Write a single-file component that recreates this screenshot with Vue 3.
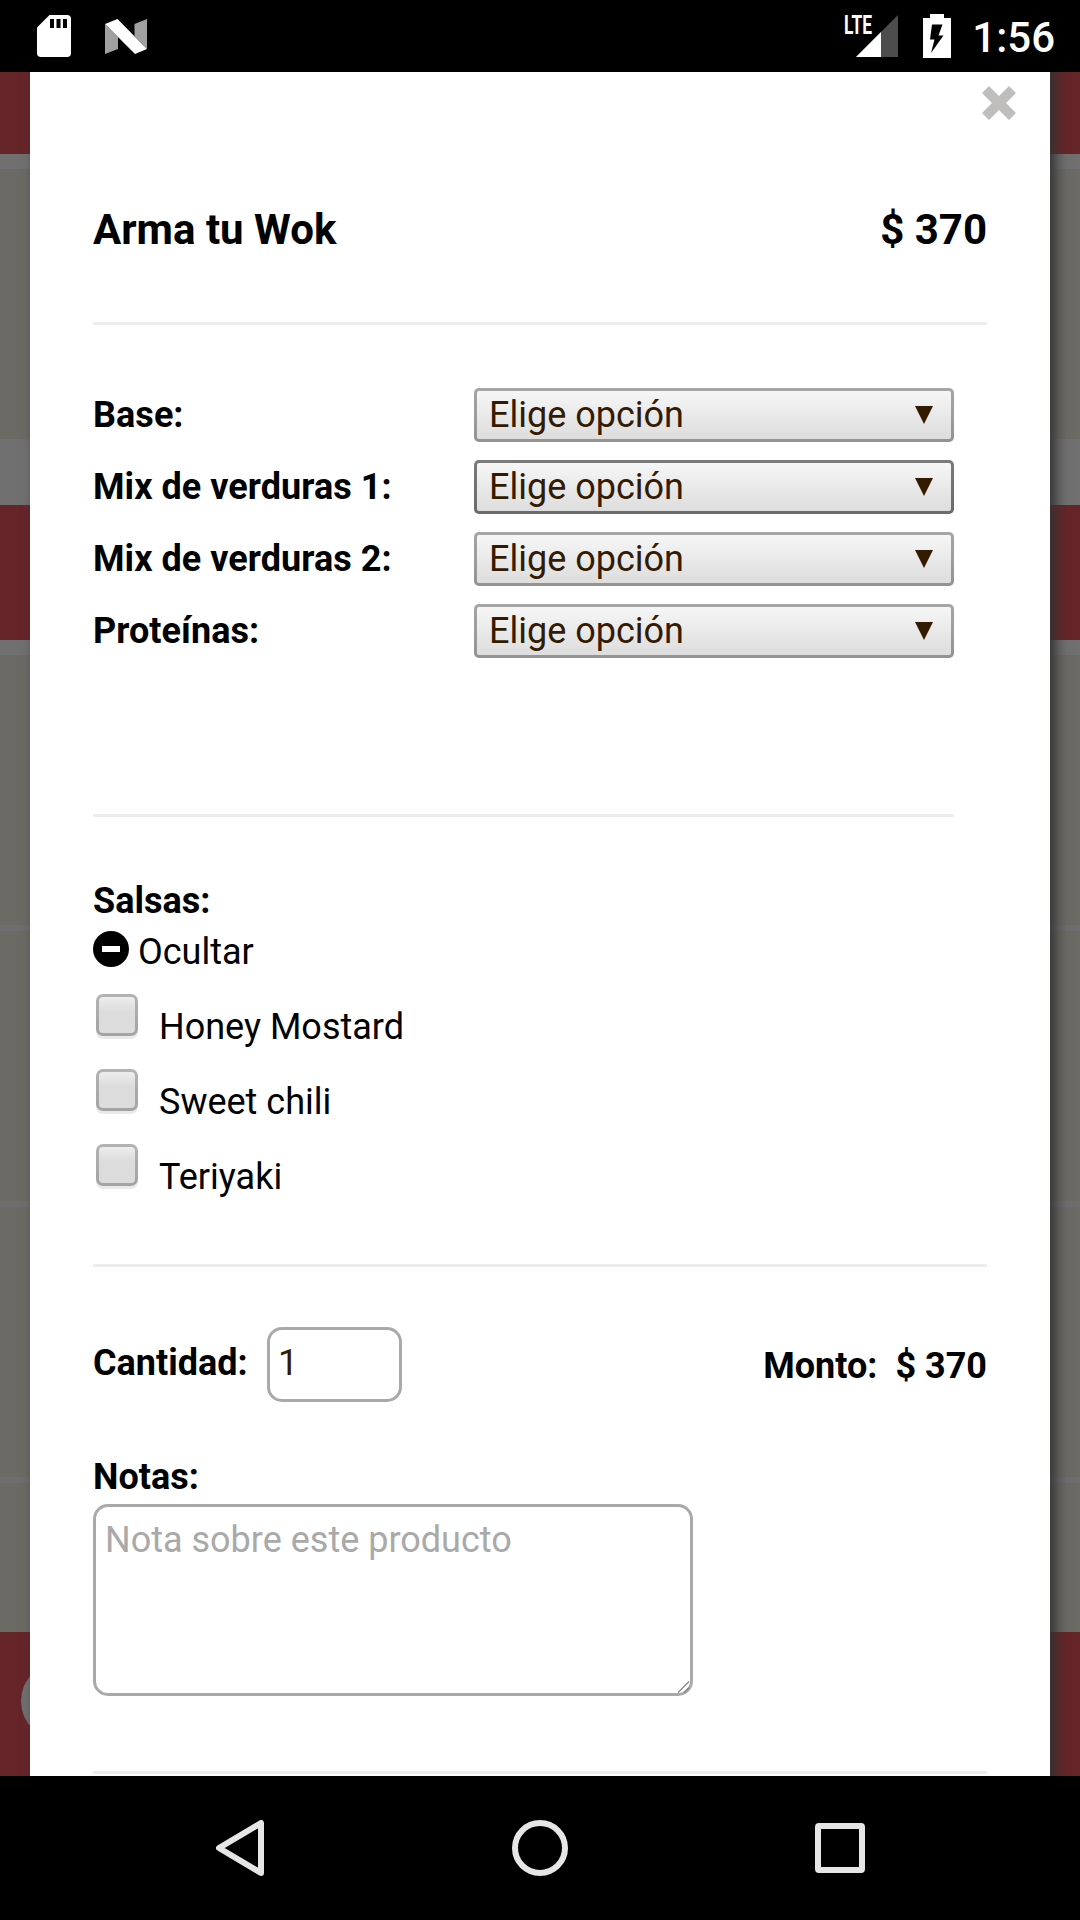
<template>
  <div class="screen">
    <header class="status-bar">
      <div class="status-left">
        <svg class="sd-icon" width="34" height="42" viewBox="0 0 34 42">
          <path fill="#fff" d="M12.5 0H30a4 4 0 0 1 4 4v34a4 4 0 0 1-4 4H4a4 4 0 0 1-4-4V12.5z" />
          <path fill="#000" d="M13 4h4v9h-4zM19.500 4h4v9h-4zM26 4h4v9h-4z" />
        </svg>
        <svg class="n-icon" width="42" height="35" viewBox="0 0 42 35">
          <path fill="#a0a0a0" d="M0 5l13 13v12L0 35zM42 0v30L29.500 17V5z" />
          <path fill="#fff" d="M0 5L12.500 0 42 30l-12 5z" />
        </svg>
      </div>
      <div class="status-right">
        <svg width="54" height="63" viewBox="0 -10 54 63">
          <path fill="#4d4d4d" d="M54 0v42H12z" />
          <path fill="#fff" d="M37 17v25H12z" />
          <text x="0" y="19" class="lte" textLength="28" lengthAdjust="spacingAndGlyphs">LTE</text>
        </svg>
        <svg class="battery" width="28" height="44" viewBox="0 0 28 44">
          <path fill="#fff" d="M7 0h14v4h7v40H0V4h7z" />
          <path fill="#000" d="M9 10.500h10.500l-4 11h5L8 39l3.500-13.500H7z" />
        </svg>
        <span class="clock">1:56</span>
      </div>
    </header>

    <main class="viewport">
      <!-- Menu page dimmed behind the dialog -->
      <div class="page">
        <div
          v-for="(band, i) in bands"
          :key="i"
          :class="['band', band.kind]"
          :style="{ height: band.height + 'px' }"
        ></div>
        <div class="page-badge"></div>
      </div>

      <section class="modal">
        <button class="close" aria-label="Cerrar">
          <svg width="34" height="34" viewBox="0 0 34 34">
            <path fill="#bfbebc" d="M7 0l10 10L27 0l7 7-10 10 10 10-7 7-10-10L7 34l-7-7 10-10L0 7z" />
          </svg>
        </button>

        <div class="title-row">
          <h1>Arma tu Wok</h1>
          <span>$ {{ price }}</span>
        </div>
        <hr />

        <div class="options">
          <div v-for="opt in options" :key="opt.label" class="option">
            <label>{{ opt.label }}</label>
            <div class="select-box" :class="{ focused: opt.focused }">
              <select>
                <option>Elige opción</option>
              </select>
              <svg width="18" height="18" viewBox="0 0 18 18">
                <path fill="#331a00" d="M0 0h18L9 18z" />
              </svg>
            </div>
          </div>
        </div>
        <hr class="short" />

        <div class="sauces">
          <h2>Salsas:</h2>
          <div class="toggle" @click="open = !open">
            <svg width="36" height="36" viewBox="0 0 36 36">
              <circle cx="18" cy="18" r="18" />
              <path fill="#fff" d="M9 15h18v6H9z" />
            </svg>
            <span>{{ open ? 'Ocultar' : 'Mostrar' }}</span>
          </div>
          <div v-if="open" class="sauce-list">
            <label v-for="sauce in sauces" :key="sauce" class="sauce">
              <input type="checkbox" />
              <span>{{ sauce }}</span>
            </label>
          </div>
        </div>
        <hr />

        <div class="quantity-row">
          <label class="quantity">
            <span>Cantidad:</span>
            <input v-model="quantity" type="text" />
          </label>
          <div class="amount">
            <span>Monto:</span>
            <span>$ {{ total }}</span>
          </div>
        </div>

        <div class="notes">
          <h2>Notas:</h2>
          <div class="notes-box">
            <textarea placeholder="Nota sobre este producto"></textarea>
            <svg width="12" height="12" viewBox="0 0 12 12">
              <path stroke="#808080" stroke-width="1.2" d="M0 11.500L11 .5M6 11.500L11 6.500" />
            </svg>
          </div>
        </div>
        <hr />
      </section>
    </main>

    <nav class="nav-bar">
      <svg width="48" height="56" viewBox="0 0 48 56">
        <path d="M45 3v50L3 28z" />
      </svg>
      <svg width="56" height="56" viewBox="0 0 56 56">
        <circle cx="28" cy="28" r="25" />
      </svg>
      <svg width="50" height="50" viewBox="0 0 50 50">
        <rect x="3" y="3" width="44" height="44" rx="1" />
      </svg>
    </nav>
  </div>
</template>

<script setup>
import { ref, computed } from 'vue'

const price = 370
const quantity = ref('1')
const open = ref(true)

const total = computed(() => price * (Number(quantity.value) || 0))

const options = [
  { label: 'Base:' },
  { label: 'Mix de verduras 1:', focused: true },
  { label: 'Mix de verduras 2:' },
  { label: 'Proteínas:' }
]

const sauces = ['Honey Mostard', 'Sweet chili', 'Teriyaki']

const bands = [
  { kind: 'red', height: 82 },
  { kind: 'gap', height: 15 },
  { kind: 'item', height: 270 },
  { kind: 'gap', height: 66 },
  { kind: 'red', height: 135 },
  { kind: 'gap', height: 15 },
  { kind: 'item', height: 270 },
  { kind: 'line', height: 6 },
  { kind: 'item', height: 270 },
  { kind: 'line', height: 6 },
  { kind: 'item', height: 270 },
  { kind: 'line', height: 6 },
  { kind: 'item', height: 149 },
  { kind: 'red', height: 144 }
]
</script>

<style>
body {
  background: #000;
}
</style>

<style scoped>
.screen {
  width: 1080px;
  height: 1920px;
  display: flex;
  flex-direction: column;
  overflow: hidden;
  background: #000;
  color: #000;
  font-family: Roboto, "Liberation Sans", sans-serif;
  font-size: 36px;
  line-height: 42px;
}
.screen * {
  box-sizing: border-box;
}
svg {
  display: block;
  flex: none;
}

/* Status bar */
.status-bar {
  flex: none;
  height: 72px;
  display: flex;
  justify-content: space-between;
  padding: 0 25px 0 37px;
}
.status-left,
.status-right {
  display: flex;
  align-items: center;
}
.n-icon {
  margin-left: 34px;
}
.lte {
  fill: #fff;
  font-size: 26px;
  font-weight: 700;
}
.battery {
  margin-left: 25px;
}
.clock {
  margin-left: 21px;
  color: #fff;
  font-size: 42px;
  font-weight: 500;
  line-height: 50px;
  padding-top: 3px;
}

/* Dimmed page */
.viewport {
  flex: 1;
  position: relative;
  overflow: hidden;
}
.red {
  background: #662529;
}
.gap {
  background: #707070;
}
.line {
  background: #6e6e70;
}
.item {
  background: #6b6a65;
}
.page-badge {
  position: absolute;
  left: 21px;
  top: 1590px;
  width: 78px;
  height: 78px;
  border-radius: 50%;
  background: #707070;
}

/* Dialog */
.modal {
  position: absolute;
  top: -40px;
  bottom: -40px;
  left: 30px;
  width: 1020px;
  padding: 173px 63px 0;
  background: #fff;
  box-shadow: 6px 0 12px #333;
}
.close {
  position: absolute;
  top: 54px;
  right: 34px;
  padding: 0;
  border: none;
  background: none;
}
hr {
  height: 3px;
  margin: 0;
  border: none;
  background: #ededed;
}
hr.short {
  width: 861px;
}
h1,
h2 {
  margin: 0;
  font-size: inherit;
  font-weight: 700;
}
.title-row {
  display: flex;
  justify-content: space-between;
  padding-bottom: 67px;
  font-size: 42px;
  font-weight: 700;
  line-height: 50px;
}

.options {
  display: flex;
  flex-direction: column;
  gap: 18px;
  padding: 63px 0 156px;
}
.option {
  display: flex;
  align-items: center;
}
.option label {
  width: 381px;
  font-weight: 700;
  letter-spacing: 0.05px;
}
.select-box {
  width: 480px;
  height: 54px;
  display: flex;
  align-items: center;
  padding: 0 18px 0 12px;
  border: 3px solid transparent;
  border-radius: 5px;
  background:
    linear-gradient(#f6f6f6, #dddddd) padding-box,
    linear-gradient(#a6a6a6, #939393) border-box;
}
.select-box.focused {
  background:
    linear-gradient(#f6f6f6, #dddddd) padding-box,
    linear-gradient(#7a7a7a, #6b6b6b) border-box;
}
select {
  flex: 1;
  appearance: none;
  height: 48px;
  padding: 0;
  border: none;
  outline: none;
  background: none;
  color: #331a00;
  font: inherit;
}

.sauces {
  padding: 63px 0 45px;
}
.toggle {
  display: flex;
  gap: 9px;
  margin-top: 9px;
}
.sauce-list {
  margin-top: 21px;
}
.sauce {
  display: flex;
  height: 75px;
  gap: 21px;
  padding-left: 3px;
}
.sauce input {
  appearance: none;
  flex: none;
  width: 42px;
  height: 42px;
  margin: 0;
  border: 3px solid transparent;
  border-radius: 7px;
  background:
    linear-gradient(#ededed, #dcdcdc 40%, #dcdcdc) padding-box,
    linear-gradient(#b3b3b3, #a3a3a3) border-box;
  box-shadow: 0 3px 0 #e9e9e9;
}
.sauce span {
  padding-top: 12px;
}

.quantity-row {
  display: flex;
  justify-content: space-between;
  padding: 60px 0 54px;
  font-weight: 700;
}
.quantity {
  display: flex;
}
.quantity span {
  width: 174px;
  padding-top: 15px;
}
.quantity input {
  width: 135px;
  height: 75px;
  padding: 0 8px 3px;
  border: 3px solid #a9a9a9;
  border-radius: 15px;
  outline: none;
  background: #fff;
  color: #331a00;
  font: inherit;
  font-weight: 400;
}
.amount {
  display: flex;
  gap: 18px;
  padding-top: 18px;
}

.notes {
  padding-bottom: 75px;
}
.notes-box {
  position: relative;
  width: 600px;
  margin-top: 6px;
}
textarea {
  display: block;
  width: 600px;
  height: 192px;
  padding: 12px 9px;
  border: 3px solid #a9a9a9;
  border-radius: 15px;
  outline: none;
  resize: none;
  font: inherit;
}
textarea::placeholder {
  color: #a9a9a9;
}
.notes-box svg {
  position: absolute;
  right: 3px;
  bottom: 3px;
}

/* Navigation bar */
.nav-bar {
  flex: none;
  height: 144px;
  display: flex;
  align-items: center;
  justify-content: space-between;
  padding: 0 215px 0 216px;
}
.nav-bar svg {
  fill: none;
  stroke: #e6e6e6;
  stroke-width: 6;
  stroke-linejoin: round;
}
</style>
